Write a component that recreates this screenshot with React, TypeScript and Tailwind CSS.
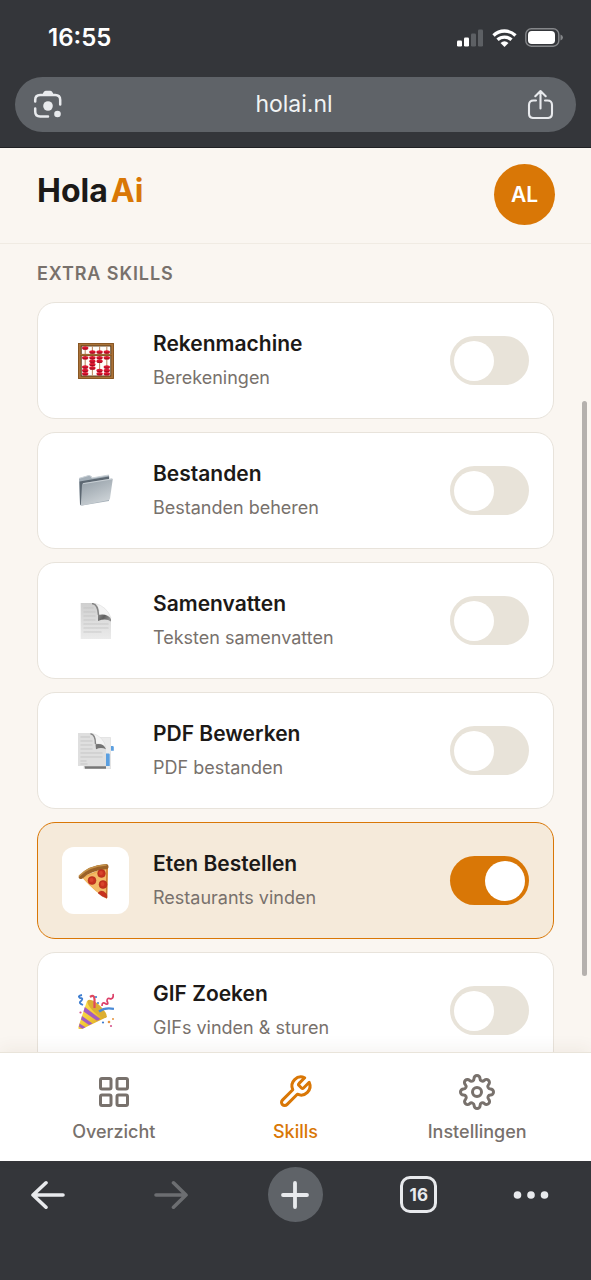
import React, { useState } from "react";

function Abacus() {
  const columns = [
    { x: 7.2, beads: [5, 14.8, 24, 27.4, 30.8] },
    { x: 14.4, beads: [9, 14.8, 18.2, 21.6, 25] },
    { x: 21.6, beads: [9, 14.8, 18.2, 27.4, 30.8] },
    { x: 28.8, beads: [9, 14.8, 24, 27.4, 30.8] },
  ];
  return (
    <svg viewBox="0 0 36 36" className="size-9" aria-hidden="true">
      <rect width="36" height="36" rx=".8" fill="#aa7238" />
      <rect x=".5" y=".5" width="35" height="35" fill="none" stroke="#80501f" strokeWidth=".8" />
      <rect x="3.2" y="3" width="29.600" height="30" fill="#fffdf8" stroke="#4f3518" strokeWidth=".9" />
      {columns.map(({ x, beads }) => (
        <g key={x}>
          <path d={`M${x} 3v30`} stroke="#c08f6a" strokeWidth="1.1" />
          {beads.map((y) => (
            <g key={y}>
              <ellipse cx={x} cy={y} rx="3.200" ry="1.750" fill="#dc1530" />
              <path d={`M${x - 2.4} ${y + 1}h4.8`} stroke="#8c0b1d" strokeWidth=".8" />
            </g>
          ))}
        </g>
      ))}
      <path d="M2 12h32" stroke="#80501f" strokeWidth="2.200" />
      <path d="M2 11.800h32" stroke="#b07a40" strokeWidth=".9" />
    </svg>
  );
}

function Folder() {
  return (
    <svg viewBox="0 0 36 36" className="size-9" aria-hidden="true">
      <defs>
        <linearGradient id="folderFront" x1="0" y1="0" x2=".5" y2="1">
          <stop offset="0" stopColor="#8f9aa3" />
          <stop offset="1" stopColor="#ccd2d6" />
        </linearGradient>
      </defs>
      <path d="M1 5.2 11 2.200l2.500 1.200.3 1.600 17-3 .5 2L31 28 4 32.500Q2 33 2 31Z" fill="#a4afb8" />
      <path d="m1 5.400 10-3 2.500 1.200.3 1.400 17-3" fill="none" stroke="#cdd4d9" strokeWidth="1" />
      <path d="m1.500 8.500 29.500-5v5L5 12 3.500 32 2 31.500Z" fill="#5d6872" />
      <path d="M4 12Q4 10.400 5.400 10.100L33.600 5.500q1.200-.1 1.100 1.100L32 25.500q-.2 1.100-1.200 1.400L4.200 32.400q-1.400.2-1.300-1.200Z" fill="url(#folderFront)" />
      <path d="M5 10.700 34 6" stroke="#dae0e4" strokeWidth=".7" />
    </svg>
  );
}

function CurledPage() {
  return (
    <svg viewBox="0 0 36 36" className="size-9" aria-hidden="true">
      <defs>
        <linearGradient id="pageCurl" x1="0" y1="0" x2="1" y2=".3">
          <stop offset="0" stopColor="#8a8a8a" />
          <stop offset=".5" stopColor="#5f5f5f" />
          <stop offset="1" stopColor="#8e8e8e" />
        </linearGradient>
        <linearGradient id="pageBody" x1="0" y1="0" x2="0" y2="1">
          <stop offset="0" stopColor="#cfcfcf" />
          <stop offset="1" stopColor="#ebebeb" />
        </linearGradient>
      </defs>
      <path d="M2.700 0H16q5 1.500 5 12h7q5 1 5 6v18H2.700Z" fill="url(#pageBody)" />
      <path d="M17 .3Q29 3.500 33 15q-4-4-12-3Q21.500 4 17 .3Z" fill="#f3f3f3" stroke="#d5d5d5" strokeWidth=".5" />
      <path d="M14 .6Q20 1 20.500 12" fill="none" stroke="#848484" strokeWidth="1.500" />
      <path d="M20 12q9-2 13 4v2.500Q28 15 20 18Z" fill="url(#pageCurl)" />
      <path d="M5.500 5h10M5.500 9h12M5.500 13h12M5.500 17h12M5.500 21h25M5.500 25h25M5.500 29h18" stroke="#bebebe" strokeWidth=".7" />
    </svg>
  );
}

function TabbedPages() {
  return (
    <svg viewBox="0 0 36 36" className="size-9" aria-hidden="true">
      <path d="M17 4.500h15.500V36H6v-4Z" fill="#ebebeb" stroke="#d2d2d2" strokeWidth=".5" />
      <path d="M33 13h1.500q1.300 0 1.300 1.200v3.600H33ZM27.500 20.500h3.200q1 0 1 1V33h-4.200Z" fill="#5b9fe0" />
      <path d="M6.500 33.200H28v2.600H7Z" fill="#777" />
      <path d="M0 0h13q4.500 1.500 4.500 11h6q4.500 1 4.500 5.500V33H0Z" fill="#dfdfdf" />
      <path d="M14.500.4Q25 3 28 14.500q-3-4-10-3.500Q18 4 14.500.4Z" fill="#f4f4f4" stroke="#d8d8d8" strokeWidth=".5" />
      <path d="M12.500.8Q17.500 1.500 17.500 11" fill="none" stroke="#858585" strokeWidth="1.400" />
      <path d="M17.500 11.200q8-1.600 10.500 5-5-2.500-10 0Z" fill="#747474" />
      <path d="M2.500 4H12M2.500 8h12M2.500 12h12M2.500 16h12M2.500 20h22M2.500 24h22M2.500 28h6M2.500 31h7" stroke="#bcbcbc" strokeWidth=".7" />
    </svg>
  );
}

function Pizza() {
  return (
    <svg viewBox="0 0 36 36" className="size-9" aria-hidden="true">
      <path d="M3.500 14 30 3.500 29 36Q19 31 3.500 14Z" fill="#efac50" />
      <path d="M5 15 28 6l-.5 28Q18 29 5 15Z" fill="#f3ba67" />
      <path d="M.7 13.500Q10 2 28 1q2.800.2 2.500 3.400-.3 1.800-2.500 1.900Q13 7.500 4.500 15.400 1 17 .5 14Z" fill="#9a6127" />
      <path d="M1.500 12.800Q11 3 28 2" fill="none" stroke="#c5924a" strokeWidth="1.600" strokeLinecap="round" />
      <path d="m29 6-.3 28.500" stroke="#c06b25" strokeWidth="1.200" />
      <g fill="#c8311e" stroke="#a8281a" strokeWidth=".5">
        <circle cx="14" cy="17.500" r="4" />
        <circle cx="23.500" cy="10.500" r="3.900" />
        <circle cx="25" cy="21.500" r="4" />
        <path d="M20 30q2.500-3 5.500-1.500 2.500 1.500 3 3L29 35Q24 34 20 30Z" />
      </g>
      <g fill="#d8442c">
        <circle cx="13.500" cy="17" r="2" />
        <circle cx="23" cy="10" r="1.900" />
        <circle cx="24.500" cy="21" r="1.900" />
      </g>
    </svg>
  );
}

function PartyPopper() {
  return (
    <svg viewBox="0 0 36 36" className="size-9" aria-hidden="true">
      <defs>
        <linearGradient id="popperCone" x1="0" y1="0" x2="1" y2="1">
          <stop offset="0" stopColor="#ffe45c" />
          <stop offset=".5" stopColor="#f4cb35" />
          <stop offset="1" stopColor="#c68a19" />
        </linearGradient>
      </defs>
      <path d="M9 8Q22 10 29 24L4 36Q0 38 .5 33.500Z" fill="url(#popperCone)" />
      <ellipse cx="19" cy="15.800" rx="12.500" ry="4.300" transform="rotate(43 19 15.800)" fill="#dcae33" />
      <path d="m6.800 14 15.500 12-3.300 1.800L5.500 18.500ZM4 23l10.500 7.500-3.500 1.500-8-5.500ZM1.500 30.500l6 3.700-3 1.600-3.500-2Z" fill="#a35cc0" />
      <path d="M12 4q4-3 4.500 2v9" fill="none" stroke="#e04a60" strokeWidth="2.200" />
      <path d="M21 18.500q6-4.500 15-2.500" fill="none" stroke="#4a8ad6" strokeWidth="2.300" />
      <path d="M4 2q-5 1-2 3 4 0 1 3-3 2 2 4" fill="none" stroke="#3f7ed0" strokeWidth="1.800" />
      <path d="M24 13q0-5 4-2 3 1 1-3 0-4 4-2 3-1 2-5" fill="none" stroke="#dc3f68" strokeWidth="1.700" />
      <g fill="#3f7ed0"><circle cx="18" cy="4" r="1.100" /><circle cx="25" cy="29.500" r="1.100" /><circle cx="20" cy="10" r="1" /></g>
      <g fill="#e4933e"><circle cx="31" cy="29" r="1.300" /><circle cx="35" cy="26" r="1" /></g>
      <g fill="#d6578e"><circle cx="2.500" cy="19.500" r="1.100" /><circle cx="33" cy="33" r="1.100" /></g>
    </svg>
  );
}

type Skill = { id: string; name: string; detail: string; icon: React.ReactNode };

const skills: Skill[] = [
  { id: "calc", name: "Rekenmachine", detail: "Berekeningen", icon: <Abacus /> },
  { id: "files", name: "Bestanden", detail: "Bestanden beheren", icon: <Folder /> },
  { id: "summary", name: "Samenvatten", detail: "Teksten samenvatten", icon: <CurledPage /> },
  { id: "pdf", name: "PDF Bewerken", detail: "PDF bestanden", icon: <TabbedPages /> },
  { id: "food", name: "Eten Bestellen", detail: "Restaurants vinden", icon: <Pizza /> },
  { id: "gif", name: "GIF Zoeken", detail: "GIFs vinden & sturen", icon: <PartyPopper /> },
];

function SkillCard({ skill, on, onToggle }: { skill: Skill; on: boolean; onToggle: () => void }) {
  return (
    <li
      className={`flex h-[117px] items-center rounded-[18px] border px-6 ${
        on ? "border-[#d97706] bg-[#f5eada]" : "border-[#e8e3db] bg-white"
      }`}
    >
      <span className="grid size-[67px] shrink-0 place-items-center rounded-xl bg-white">{skill.icon}</span>
      <label htmlFor={skill.id} className="ml-6 flex min-w-0 flex-1 flex-col gap-1.5">
        <span className="text-[21px] leading-7 font-semibold text-[#1c1917]">{skill.name}</span>
        <span className="text-[18px] leading-7 text-[#78716c]">{skill.detail}</span>
      </label>
      <input
        id={skill.id}
        type="checkbox"
        role="switch"
        checked={on}
        onChange={onToggle}
        className="flex h-[49px] w-[79px] shrink-0 cursor-pointer appearance-none items-center rounded-full bg-[#e8e3d9] px-1 before:size-10 before:rounded-full before:bg-white checked:justify-end checked:bg-[#d97706]"
      />
    </li>
  );
}

function StatusBar() {
  return (
    <div className="flex h-[77px] items-center justify-between pr-7 pb-0.5 pl-12 text-white">
      <time className="text-[24px] leading-7 font-semibold">16:55</time>
      <div className="flex items-center gap-2">
        <svg viewBox="0 0 27 18" className="h-[18px] w-[27px]" fill="currentColor" aria-hidden="true">
          <rect x="0" y="11.500" width="5" height="6" rx="1.300" />
          <rect x="7" y="8.500" width="5" height="9" rx="1.300" />
          <g fill="#5d6064"><rect x="14" y="4.500" width="5" height="13" rx="1.300" /><rect x="21" y="0.500" width="5" height="17" rx="1.300" /></g>
        </svg>
        <svg viewBox="0 0 25 18" className="h-[18px] w-[25px]" aria-hidden="true">
          <g fill="none" stroke="currentColor" strokeWidth="3.300">
            <path d="M1.500 6.500C7.700.5 17.300.5 23.500 6.500" />
            <path d="M5.500 10.800c4-3.700 10-3.700 14 0" />
          </g>
          <path d="m12.500 18-4-4q4-3.400 8 0Z" fill="currentColor" />
        </svg>
        <svg viewBox="0 0 38 19" className="h-[19px] w-[38px]" aria-hidden="true">
          <rect x=".8" y=".8" width="33" height="17.400" rx="5.500" fill="none" stroke="#85878a" strokeWidth="1.400" />
          <rect x="3" y="3" width="27" height="13" rx="3.800" fill="currentColor" />
          <path d="M35.500 6.500q2.500 1 2.500 3t-2.500 3Z" fill="#85878a" />
        </svg>
      </div>
    </div>
  );
}

function AddressBar() {
  return (
    <div className="mx-[15px] flex h-[55px] items-center justify-between rounded-full bg-[#5f6368] pr-[21px] pb-0.5 pl-[18px] text-[#e8eaed]">
      <button type="button" aria-label="Lens">
        <svg viewBox="0 0 30 30" className="size-[30px]" fill="none" stroke="currentColor" strokeWidth="2.500" aria-hidden="true">
          <path d="M2.200 12.500V11q0-5 5-5h15q5 0 5 5v4.500M2.200 19.500v3q0 5 5 5H15" strokeLinecap="round" />
          <path d="M9.500 6q1-4.200 3.500-4.200h4q2.500 0 3.500 4.200Z" fill="currentColor" stroke="none" />
          <circle cx="15" cy="17" r="4.800" fill="currentColor" stroke="none" />
          <circle cx="24.500" cy="25" r="3.300" fill="currentColor" stroke="none" />
        </svg>
      </button>
      <span className="text-[23px] leading-8 text-[#f1f3f4]">holai.nl</span>
      <button type="button" aria-label="Share">
        <svg viewBox="0 0 30 30" className="size-[30px]" fill="none" stroke="currentColor" strokeWidth="2.100" strokeLinecap="round" strokeLinejoin="round" aria-hidden="true">
          <path d="M11 11.500H8.500q-4.500 0-4.500 4.500v8.500Q4 29 8.500 29h14q4.500 0 4.500-4.500V16q0-4.500-4.500-4.500H20M15.500 19.500V2M10.300 7.200 15.500 2l5.200 5.200" />
        </svg>
      </button>
    </div>
  );
}

const tabs = [
  {
    name: "Overzicht",
    href: "#overzicht",
    active: false,
    drawing: (
      <>
        <rect x="3" y="3" width="7" height="7" rx="1" />
        <rect x="14" y="3" width="7" height="7" rx="1" />
        <rect x="14" y="14" width="7" height="7" rx="1" />
        <rect x="3" y="14" width="7" height="7" rx="1" />
      </>
    ),
  },
  {
    name: "Skills",
    href: "#skills",
    active: true,
    drawing: (
      <path d="M14.7 6.3a1 1 0 0 0 0 1.4l1.6 1.6a1 1 0 0 0 1.4 0l3.77-3.77a6 6 0 0 1-7.94 7.94l-6.91 6.91a2.12 2.12 0 0 1-3-3l6.91-6.91a6 6 0 0 1 7.94-7.94l-3.76 3.76z" />
    ),
  },
  {
    name: "Instellingen",
    href: "#instellingen",
    active: false,
    drawing: (
      <>
        <circle cx="12" cy="12" r="3" />
        <path d="M19.4 15a1.65 1.65 0 0 0 .33 1.82l.06.06a2 2 0 0 1-2.83 2.83l-.06-.06a1.65 1.65 0 0 0-1.82-.33 1.65 1.65 0 0 0-1 1.51V21a2 2 0 0 1-4 0v-.09A1.65 1.65 0 0 0 9 19.4a1.65 1.65 0 0 0-1.82.33l-.06.06a2 2 0 0 1-2.83-2.83l.06-.06A1.65 1.65 0 0 0 4.68 15a1.65 1.65 0 0 0-1.51-1H3a2 2 0 0 1 0-4h.09A1.65 1.65 0 0 0 4.6 9a1.65 1.65 0 0 0-.33-1.82l-.06-.06a2 2 0 0 1 2.83-2.83l.06.06A1.65 1.65 0 0 0 9 4.68a1.65 1.65 0 0 0 1-1.51V3a2 2 0 0 1 4 0v.09a1.65 1.65 0 0 0 1 1.51 1.65 1.65 0 0 0 1.82-.33l.06-.06a2 2 0 0 1 2.83 2.83l-.06.06A1.65 1.65 0 0 0 19.4 9a1.65 1.65 0 0 0 1.51 1H21a2 2 0 0 1 0 4h-.09a1.65 1.65 0 0 0-1.51 1z" />
      </>
    ),
  },
];

function TabBar() {
  return (
    <nav className="relative grid h-[109px] shrink-0 grid-cols-3 border-t border-[#e9e4da] bg-white px-[23px] shadow-[0_-4px_16px_rgba(80,50,20,0.06)]">
      {tabs.map((tab) => (
        <a
          key={tab.name}
          href={tab.href}
          className={`flex flex-col items-center gap-2 pt-[21px] ${tab.active ? "text-[#d97706]" : "text-[#78716c]"}`}
        >
          <svg viewBox="0 0 24 24" className="size-9 overflow-visible" fill="none" stroke="currentColor" strokeWidth="2" strokeLinecap="round" strokeLinejoin="round" aria-hidden="true">
            {tab.drawing}
          </svg>
          <span className="text-[18px] leading-7 font-medium">{tab.name}</span>
        </a>
      ))}
    </nav>
  );
}

function BrowserToolbar() {
  return (
    <div className="flex h-[119px] shrink-0 items-start justify-between bg-[#34363a] pt-1.5 pr-11 pl-5 text-[#e8eaed]">
      <button type="button" aria-label="Back" className="grid size-[55px] place-items-center">
        <svg viewBox="0 0 34 30" className="h-[30px] w-[34px]" fill="none" stroke="currentColor" strokeWidth="3.600" strokeLinecap="round" strokeLinejoin="round" aria-hidden="true">
          <path d="M32 15H2M15 2.800 2 15l13 12.200" />
        </svg>
      </button>
      <button type="button" aria-label="Forward" className="grid size-[55px] place-items-center text-[#6c6e71]">
        <svg viewBox="0 0 34 30" className="h-[30px] w-[34px]" fill="none" stroke="currentColor" strokeWidth="3.600" strokeLinecap="round" strokeLinejoin="round" aria-hidden="true">
          <path d="M2 15h30M19.500 2.800 32 15 19.500 27.200" />
        </svg>
      </button>
      <button type="button" aria-label="New tab" className="grid size-[55px] place-items-center rounded-full bg-[#5f6368]">
        <svg viewBox="0 0 28 28" className="size-7" fill="none" stroke="currentColor" strokeWidth="3.800" strokeLinecap="round" aria-hidden="true">
          <path d="M14 2v24M2 14h24" />
        </svg>
      </button>
      <button type="button" aria-label="Tabs" className="grid size-[55px] place-items-center">
        <span className="grid size-[37px] place-items-center rounded-[10px] border-3 border-current text-[17px] leading-5 font-bold">16</span>
      </button>
      <button type="button" aria-label="More" className="flex h-[55px] w-8 items-center justify-center">
        <svg viewBox="0 0 36 8" className="h-2 w-9 shrink-0" fill="currentColor" aria-hidden="true">
          <circle cx="4.500" cy="4" r="3.800" />
          <circle cx="18" cy="4" r="3.800" />
          <circle cx="31.500" cy="4" r="3.800" />
        </svg>
      </button>
    </div>
  );
}

export default function App() {
  const [enabled, setEnabled] = useState<string[]>(["food"]);
  const toggle = (id: string) =>
    setEnabled((ids) => (ids.includes(id) ? ids.filter((other) => other !== id) : [...ids, id]));

  return (
    <div className="flex h-dvh flex-col overflow-hidden bg-[#faf6f1] font-['Inter',sans-serif]">
      <div className="shrink-0 border-b border-[#202124] bg-[#34363a] pb-[15px]">
        <StatusBar />
        <AddressBar />
      </div>
      <header className="flex h-24 shrink-0 items-center justify-between border-b border-[#f0ebe3] pr-9 pb-0.5 pl-[37px]">
        <h1 className="flex gap-[3px] pb-2 text-[32px] leading-10 font-bold text-[#1c1917]">
          Hola<span className="text-[#d97706]">Ai</span>
        </h1>
        <button type="button" className="size-[61px] rounded-full bg-[#d97706] text-[21px] leading-7 font-semibold text-white">
          AL
        </button>
      </header>
      <main className="relative min-h-0 flex-1 overflow-hidden px-[37px] pt-4">
        <h2 className="text-[18px] leading-7 font-semibold tracking-wider text-[#78716c]">EXTRA SKILLS</h2>
        <ul className="mt-3.5 flex flex-col gap-[13px]">
          {skills.map((skill) => (
            <SkillCard key={skill.id} skill={skill} on={enabled.includes(skill.id)} onToggle={() => toggle(skill.id)} />
          ))}
        </ul>
        <div className="absolute top-[157px] right-1 h-[575px] w-[5px] rounded-full bg-[#b5b1ae]" />
      </main>
      <TabBar />
      <BrowserToolbar />
    </div>
  );
}
